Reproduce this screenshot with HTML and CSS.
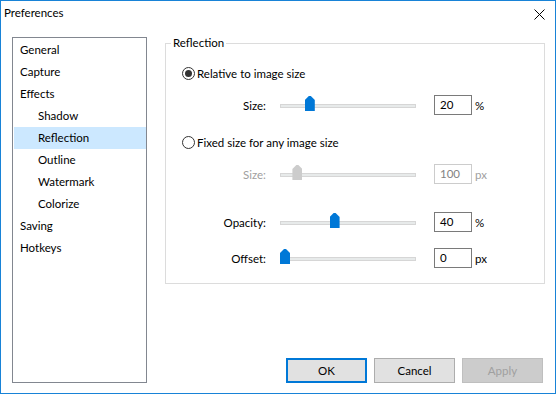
FILE: index.html
```html
<!DOCTYPE html>
<html lang="en">
<head>
    <meta charset="UTF-8">
    <title>Preferences</title>
    <link rel="stylesheet" href="styles.css">
</head>
<body>
    <div class="dialog">
        <div class="titlebar">
            <span class="title">Preferences</span>
            <svg class="close" width="11" height="11" viewBox="0 0 11 11">
                <path d="M0.5 0.5 L10.5 10.5 M10.5 0.5 L0.5 10.5" stroke="#000" stroke-width="1" fill="none"/>
            </svg>
        </div>

        <div class="content">
            <ul class="tree">
                <li>General</li>
                <li>Capture</li>
                <li>Effects</li>
                <li class="sub">Shadow</li>
                <li class="sub selected">Reflection</li>
                <li class="sub">Outline</li>
                <li class="sub">Watermark</li>
                <li class="sub">Colorize</li>
                <li>Saving</li>
                <li>Hotkeys</li>
            </ul>

            <div class="panel">
                <fieldset class="group">
                    <legend>Reflection</legend>

                    <div class="radio-row first">
                        <span class="radio checked"></span>
                        <span>Relative to image size</span>
                    </div>
                    <div class="slider-row r-size">
                        <span class="label">Size:</span>
                        <div class="track"><div class="thumb" style="--v:0.2"></div></div>
                        <div class="field">20</div>
                        <span class="unit">%</span>
                    </div>

                    <div class="radio-row second">
                        <span class="radio"></span>
                        <span>Fixed size for any image size</span>
                    </div>
                    <div class="slider-row r-fixed disabled">
                        <span class="label">Size:</span>
                        <div class="track"><div class="thumb" style="--v:0.1"></div></div>
                        <div class="field">100</div>
                        <span class="unit">px</span>
                    </div>

                    <div class="slider-row r-opacity">
                        <span class="label">Opacity:</span>
                        <div class="track"><div class="thumb" style="--v:0.4"></div></div>
                        <div class="field">40</div>
                        <span class="unit">%</span>
                    </div>
                    <div class="slider-row r-offset">
                        <span class="label">Offset:</span>
                        <div class="track"><div class="thumb" style="--v:0"></div></div>
                        <div class="field">0</div>
                        <span class="unit">px</span>
                    </div>
                </fieldset>

                <div class="buttons">
                    <button class="btn default">OK</button>
                    <button class="btn">Cancel</button>
                    <button class="btn off">Apply</button>
                </div>
            </div>
        </div>
    </div>
</body>
</html>
```

FILE: styles.css
```css
body {
    margin: 0;
    background: #fff;
    font-family: Lato, "Liberation Sans", sans-serif;
    font-size: 11.5px;
    color: #000;
}

.dialog {
    width: 556px;
    height: 394px;
    box-sizing: border-box;
    border: 1px solid #1883d7;
    background: #fff;
    display: flex;
    flex-direction: column;
}

.titlebar {
    height: 30px;
    box-sizing: border-box;
    padding: 4px 10px 0 3px;
    display: flex;
    justify-content: space-between;
    align-items: flex-start;
    line-height: 16px;
}
.close {
    margin-top: 4px;
}

.content {
    flex: 1;
    display: flex;
    padding: 6px 10px 10px 11px;
}

/* left tree */
.tree {
    list-style: none;
    margin: 0;
    padding: 1px 0 0;
    width: 135px;
    box-sizing: border-box;
    border: 1px solid #828790;
}
.tree li {
    height: 22px;
    line-height: 22px;
    padding-left: 6px;
    margin-left: 1px;
}
.tree li.sub {
    padding-left: 24px;
}
.tree li.selected {
    background: #cce8ff;
}

/* right side */
.panel {
    flex: 1;
    margin-left: 18px;
    display: flex;
    flex-direction: column;
    justify-content: space-between;
}

.group {
    margin: 0;
    padding: 0 0 15px;
    border: 1px solid #dcdcdc;
    min-width: 0;
}
.group legend {
    margin-left: 5px;
    padding: 0 2px;
    line-height: 12px;
}

.radio-row {
    display: flex;
    align-items: center;
    height: 16px;
    padding-left: 16px;
}
.radio-row.first { margin-top: 16px; }
.radio-row.second { margin-top: 19px; }

.radio {
    width: 11px;
    height: 11px;
    border: 1px solid #333;
    border-radius: 50%;
    margin-right: 2px;
    display: flex;
    justify-content: center;
    align-items: center;
}
.radio.checked::after {
    content: "";
    width: 7px;
    height: 7px;
    border-radius: 50%;
    background: #333;
}

.slider-row {
    display: flex;
    align-items: center;
    height: 20px;
}
.r-size { margin-top: 14px; }
.r-fixed { margin-top: 14px; }
.r-opacity { margin-top: 28px; }
.r-offset { margin-top: 16px; }

.label {
    width: 100px;
    text-align: right;
}
.track {
    position: relative;
    width: 134px;
    height: 2px;
    margin: 2px 0 0 14px;
    background: #e7eaea;
    border: 1px solid #d6d6d6;
}
.thumb {
    position: absolute;
    left: calc((100% - 10px) * var(--v) - 1px);
    top: -9px;
    width: 10px;
    height: 15px;
    background: #0078d7;
    clip-path: polygon(0 4px, 4px 0, 6px 0, 100% 4px, 100% 100%, 0 100%);
}
.field {
    width: 38px;
    height: 20px;
    box-sizing: border-box;
    margin-left: 18px;
    padding-left: 5px;
    border: 1px solid #7a7a7a;
    line-height: 18px;
}
.unit {
    margin-left: 3px;
}

.disabled {
    color: #a0a0a0;
}
.disabled .thumb {
    background: #cccccc;
}
.disabled .field {
    border-color: #cccccc;
    color: #838383;
}

.buttons {
    display: flex;
    justify-content: flex-end;
    gap: 7px;
    padding-right: 2px;
}
.btn {
    width: 81px;
    height: 25px;
    box-sizing: border-box;
    border: 1px solid #adadad;
    background: #e1e1e1;
    font-family: inherit;
    font-size: 11.5px;
    color: #000;
    padding: 0;
}
.btn.default {
    border: 2px solid #0078d7;
}
.btn.off {
    background: #cccccc;
    border-color: #bfbfbf;
    color: #a0a0a0;
}
```
